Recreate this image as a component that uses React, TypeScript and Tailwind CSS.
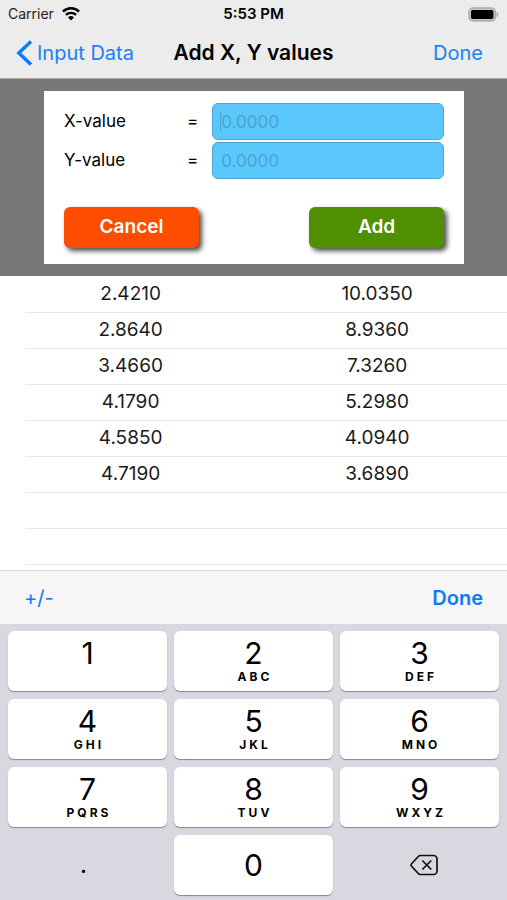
import { useState } from "react";

interface Point {
    x: string;
    y: string;
}

interface Key {
    digit: string;
    letters: string;
}

const POINTS: Point[] = [
    { x: "2.4210", y: "10.0350" },
    { x: "2.8640", y: "8.9360" },
    { x: "3.4660", y: "7.3260" },
    { x: "4.1790", y: "5.2980" },
    { x: "4.5850", y: "4.0940" },
    { x: "4.7190", y: "3.6890" },
    { x: "", y: "" },
    { x: "", y: "" },
];

const KEYS: Key[] = [
    { digit: "1", letters: "" },
    { digit: "2", letters: "ABC" },
    { digit: "3", letters: "DEF" },
    { digit: "4", letters: "GHI" },
    { digit: "5", letters: "JKL" },
    { digit: "6", letters: "MNO" },
    { digit: "7", letters: "PQRS" },
    { digit: "8", letters: "TUV" },
    { digit: "9", letters: "WXYZ" },
];

function WifiIcon() {
    return (
        <svg width="18" height="14" viewBox="0 0 18 14" fill="none" stroke="black" aria-hidden="true">
            <path d="M1 4.600a11.400 11.400 0 0 1 16 0" strokeWidth="2.6" />
            <path d="M3.900 7.900a7.200 7.200 0 0 1 10.200 0" strokeWidth="2.3" />
            <path d="M9 13.400 6 10.400a4.300 4.300 0 0 1 6 0z" fill="black" stroke="none" />
        </svg>
    );
}

function BatteryIcon() {
    return (
        <svg width="31" height="15" viewBox="0 0 31 15" aria-hidden="true">
            <rect x="1" y="1" width="26.4" height="13" rx="4" fill="#c4c4c4" stroke="#acacac" strokeWidth="1.5" />
            <rect x="3" y="3" width="22.4" height="9" rx="1.8" fill="black" />
            <path d="M28.600 5v5c1-.4 1.800-1.400 1.800-2.500s-.8-2.100-1.800-2.500z" fill="#acacac" />
        </svg>
    );
}

function BackspaceIcon() {
    return (
        <svg
            width="28"
            height="22"
            viewBox="0 0 28 22"
            fill="none"
            stroke="#111"
            strokeWidth="1.7"
            strokeLinecap="round"
            strokeLinejoin="round"
            aria-hidden="true"
        >
            <path d="M10.500 1.500H23.500a3.500 3.500 0 0 1 3.500 3.500v12a3.500 3.500 0 0 1-3.500 3.500H10.500a3 3 0 0 1-2.200-1L1.600 12.200a1.800 1.800 0 0 1 0-2.400L8.300 2.500a3 3 0 0 1 2.200-1z" />
            <path d="m12.800 7 8 8M20.800 7l-8 8" />
        </svg>
    );
}

interface ValueFieldProps {
    id: string;
    label: string;
    value: string;
    active?: boolean;
    onChange: (value: string) => void;
}

function ValueField({ id, label, value, active, onChange }: ValueFieldProps) {
    return (
        <div className="flex items-center">
            <label htmlFor={id} className="flex flex-1 justify-between pr-3.5">
                <span>{label}</span>
                <span>=</span>
            </label>
            <div className="relative w-[61%]">
                <input
                    id={id}
                    type="text"
                    inputMode="decimal"
                    placeholder="0.0000"
                    value={value}
                    onChange={(e) => onChange(e.target.value)}
                    className="block h-[37px] w-full rounded-md border border-[#4ba6d8] bg-[#5ac8fa] px-2 placeholder:text-[#4ba3d3]"
                />
                {active && <span className="absolute top-2 left-2 h-5 w-px bg-[#4ba3d3]" />}
            </div>
        </div>
    );
}

export default function App() {
    const [xValue, setXValue] = useState("");
    const [yValue, setYValue] = useState("");

    function clear() {
        setXValue("");
        setYValue("");
    }

    return (
        <div className="flex min-h-screen flex-col bg-white font-['Inter',sans-serif] text-black">
            <header className="border-b border-[#a8a8a8] bg-[#ececec]">
                <div className="grid h-7 grid-cols-3 items-center px-2 text-sm">
                    <div className="flex items-center gap-2 text-[#222]">
                        Carrier
                        <WifiIcon />
                    </div>
                    <div className="text-center text-[15px] font-semibold">5:53 PM</div>
                    <div className="flex justify-end">
                        <BatteryIcon />
                    </div>
                </div>
                <nav className="flex h-[50px] items-center justify-between pr-6 pl-4 text-xl">
                    <button type="button" className="flex flex-1 items-center gap-1 whitespace-nowrap text-[#1a80f6]">
                        <svg className="shrink-0" width="17" height="26" viewBox="0 0 17 26" fill="none" aria-hidden="true">
                            <path d="M15 1.500 2.800 13 15 24.500" stroke="#0a7aff" strokeWidth="3.400" />
                        </svg>
                        Input Data
                    </button>
                    <h1 className="pl-2 text-[21px] font-semibold whitespace-nowrap">Add X, Y values</h1>
                    <button type="button" className="flex-1 text-right text-[#1a80f6]">
                        Done
                    </button>
                </nav>
            </header>

            <section className="bg-[#777] py-3 pr-[43px] pl-11">
                <form className="bg-white px-5 pt-3 pb-4 text-[17px]" onSubmit={(e) => e.preventDefault()}>
                    <div className="space-y-0.5">
                        <ValueField id="x-value" label="X-value" value={xValue} onChange={setXValue} active />
                        <ValueField id="y-value" label="Y-value" value={yValue} onChange={setYValue} />
                    </div>
                    <div className="mt-7 flex justify-between text-[19px] font-semibold text-white">
                        <button
                            type="button"
                            onClick={clear}
                            className="h-[41px] w-[135px] rounded-md bg-[#ff4d00] shadow-[3px_3px_5px_rgba(0,0,0,0.7)]"
                        >
                            Cancel
                        </button>
                        <button
                            type="submit"
                            className="h-[41px] w-[135px] rounded-md bg-[#4f8f00] shadow-[3px_3px_5px_rgba(0,0,0,0.7)]"
                        >
                            Add
                        </button>
                    </div>
                </form>
            </section>

            <main className="flex-1 pl-[26px]">
                <table className="w-full table-fixed text-center text-[19px] text-[#1a1a1a]">
                    <tbody>
                        {POINTS.map((point, i) => (
                            <tr key={i} className="h-9 border-b border-[#e9e9eb]">
                                <td className="w-[46%] pr-3">{point.x}</td>
                                <td>{point.y}</td>
                            </tr>
                        ))}
                    </tbody>
                </table>
            </main>

            <div className="flex h-[54px] items-center justify-between border-t border-[#dcdcdf] bg-[#f7f5f6] px-6 text-xl text-[#0a7aff]">
                <button type="button">+/-</button>
                <button type="button" className="font-semibold">
                    Done
                </button>
            </div>

            <div className="grid grid-cols-3 gap-x-[7px] gap-y-2 bg-[#d7d8e0] px-2 pt-[7px] pb-[5px]">
                {KEYS.map((key) => (
                    <button
                        key={key.digit}
                        type="button"
                        className="flex h-15 flex-col items-center rounded-md bg-white pt-1.5 shadow-[0_1px_1px_#85868a]"
                    >
                        <span className="text-3xl leading-8">{key.digit}</span>
                        <span className="pl-[3px] text-xs leading-4 font-bold tracking-[3px]">{key.letters}</span>
                    </button>
                ))}
                <button type="button" className="h-15 pr-2 text-2xl">
                    .
                </button>
                <button type="button" className="h-15 rounded-md bg-white text-3xl shadow-[0_1px_1px_#85868a]">
                    0
                </button>
                <button type="button" aria-label="Delete" className="flex h-15 items-center justify-center pl-2">
                    <BackspaceIcon />
                </button>
            </div>
        </div>
    );
}
